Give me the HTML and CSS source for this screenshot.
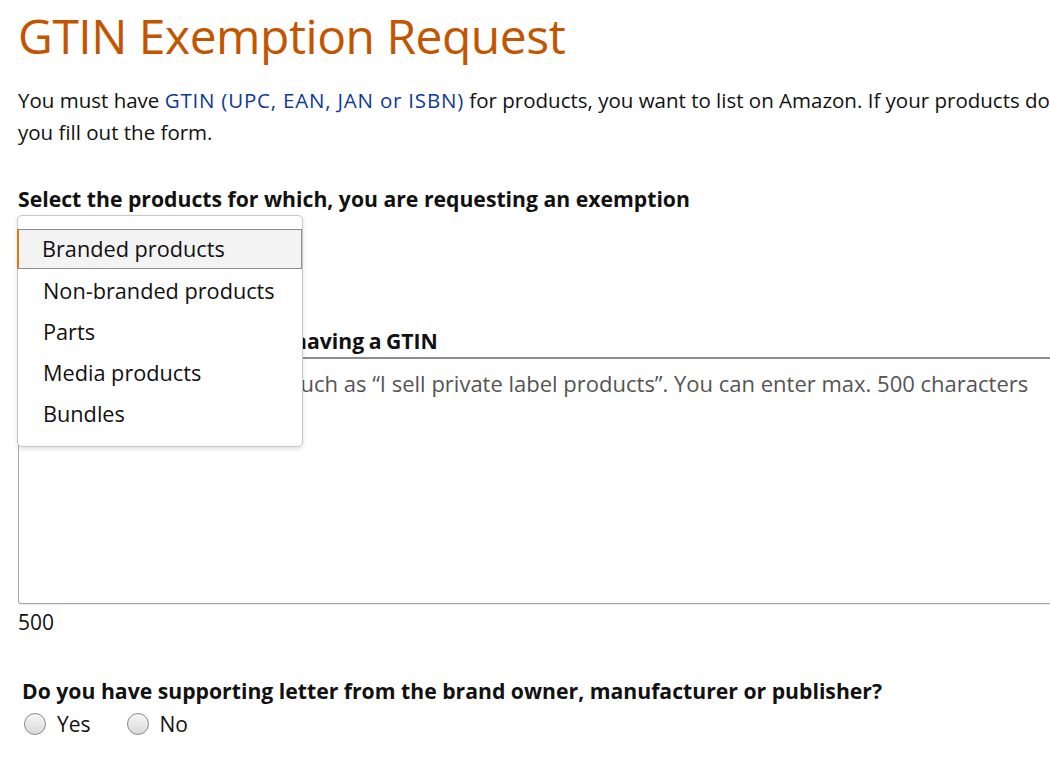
FILE: index.html
```html
<!DOCTYPE html>
<html lang="en">
<head>
<meta charset="utf-8">
<title>GTIN Exemption Request</title>
<link rel="stylesheet" href="styles.css">
</head>
<body>
<div class="page">
  <h1 class="title">GTIN Exemption Request</h1>
  <p class="intro">You must have <a class="link" href="#">GTIN (UPC, EAN, JAN or ISBN)</a> for products, you want to list on Amazon. If your products do not have a GTIN, you can request an exemption. Read the guidelines before<br>you fill out the form.</p>

  <div class="field">
    <div class="label">Select the products for which, you are requesting an exemption</div>
    <div class="select-wrap">
      <div class="select-btn"></div>
      <ul class="menu">
        <li class="menu-item active">Branded products</li>
        <li class="menu-item">Non-branded products</li>
        <li class="menu-item">Parts</li>
        <li class="menu-item">Media products</li>
        <li class="menu-item">Bundles</li>
      </ul>
    </div>
  </div>

  <div class="field reason">
    <div class="label label-reason">Explain the reason for not having a GTIN</div>
    <div class="textarea"><span class="placeholder">Describe your reasoning, such as “I sell private label products”. You can enter max. 500 characters</span></div>
    <div class="counter">500</div>
  </div>

  <div class="field question">
    <div class="label">Do you have supporting letter from the brand owner, manufacturer or publisher?</div>
    <div class="radios">
      <label class="radio"><span class="dot"></span>Yes</label>
      <label class="radio"><span class="dot"></span>No</label>
    </div>
  </div>
</div>
</body>
</html>
```

FILE: styles.css
```css
html, body {
  margin: 0;
  padding: 0;
  background: #ffffff;
}
body {
  font-family: "Open Sans", "Noto Sans", "Liberation Sans", sans-serif;
  color: #111111;
  font-size: 21px;
  line-height: 32px;
  width: 1050px;
  height: 781px;
  overflow: hidden;
}
.page {
  padding: 0 0 0 18px;
}
.title {
  margin: 0;
  padding-top: 6px;
  font-size: 48px;
  line-height: 60px;
  font-weight: 400;
  color: #c45500;
  letter-spacing: -0.5px;
}
.intro {
  margin: 18px 0 0 0;
  white-space: nowrap;
  font-size: 20.5px;
}
.link {
  color: #0e3a94;
  text-decoration: none;
  letter-spacing: 0.8px;
}
.label {
  font-weight: 700;
  line-height: 32px;
  font-size: 21.2px;
  white-space: nowrap;
}
.label-reason {
  word-spacing: -1px;
}
.field {
  margin-top: 35px;
}
.select-wrap {
  position: relative;
  height: 94px;
}
.select-btn {
  width: 284px;
  height: 36px;
  margin-top: 4px;
  border: 1px solid #adb1b8;
  border-radius: 3px;
  background: #eff0f3;
  box-sizing: border-box;
}
.menu {
  position: absolute;
  left: -1px;
  top: -4px;
  width: 286px;
  margin: 0;
  padding: 13px 0 12px 0;
  list-style: none;
  background: #ffffff;
  border: 1px solid #c8c8c8;
  border-radius: 5px;
  box-shadow: 0 2px 4px rgba(0, 0, 0, 0.13);
  box-sizing: border-box;
  z-index: 2;
  font-size: 21.7px;
}
.menu-item {
  height: 41px;
  line-height: 41px;
  padding-left: 25px;
  color: #111;
  box-sizing: border-box;
}
.menu-item.active {
  height: 40px;
  line-height: 38px;
  margin-bottom: 1px;
  background: #f3f3f3;
  border: 1px solid #8d8d8d;
  border-left: 2px solid #e47911;
  padding-left: 23px;
  margin-left: -1px;
}
.reason {
  margin-top: 12px;
}
.textarea {
  width: 1100px;
  height: 247px;
  border: 1px solid #a6a6a6;
  border-top: 2px solid #8c8c8c;
  border-radius: 3px;
  box-sizing: border-box;
  padding: 8px 0 0 10px;
  box-shadow: 0 1px 0 rgba(0, 0, 0, 0.07);
  white-space: nowrap;
}
.placeholder {
  color: #555555;
  line-height: 32px;
  font-size: 22px;
}
.counter {
  margin-top: 2px;
  line-height: 32px;
}
.question {
  margin-top: 37px;
  padding-left: 4px;
}
.radios {
  display: flex;
  gap: 36px;
  align-items: center;
  margin: 1px 0 0 2px;
}
.radio {
  display: flex;
  align-items: center;
  gap: 11px;
}
.dot {
  width: 22px;
  height: 22px;
  border-radius: 50%;
  border: 1px solid #8a8a8a;
  background: linear-gradient(#f6f6f6, #d9d9d9);
  box-sizing: border-box;
  display: inline-block;
}
```
